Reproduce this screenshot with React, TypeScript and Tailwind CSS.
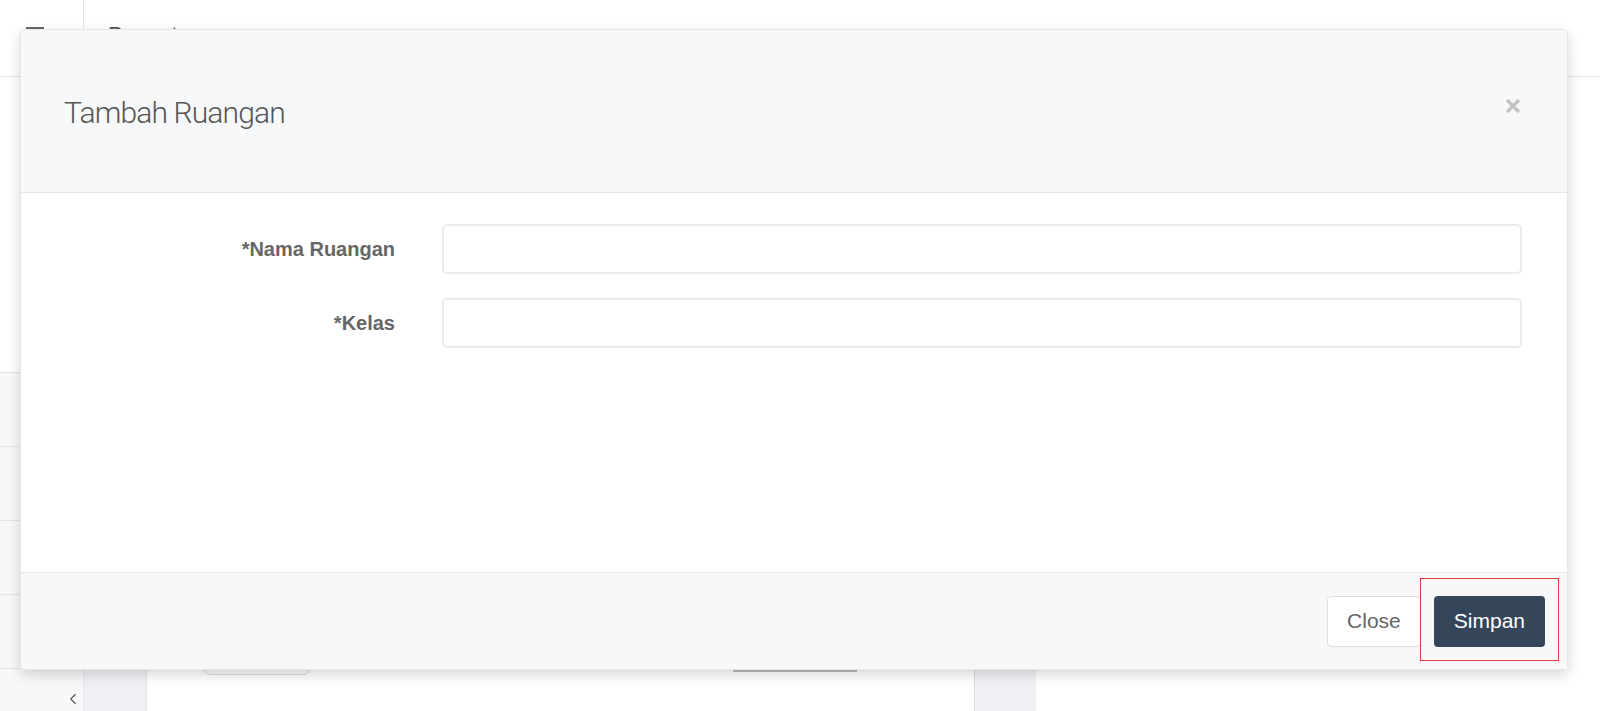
import { ChevronLeft } from "lucide-react";

function CloseIcon() {
  return (
    <svg width="16" height="16" viewBox="0 0 16 16" fill="none">
      <path d="M2 2L14 14M14 2L2 14" stroke="#c4c4c4" strokeWidth="3.2" />
    </svg>
  );
}

function FormRow({ label }: { label: string }) {
  return (
    <div className="flex items-center">
      <label className="w-[374px] text-right text-[20px] font-bold text-[#666]">
        {label}
      </label>
      <input
        type="text"
        className="ml-[47px] h-[50px] flex-1 rounded-[5px] border-2 border-[#ebebeb] bg-white px-3 outline-none"
      />
    </div>
  );
}

export default function App() {
  return (
    <div className="relative h-[711px] w-[1600px] overflow-hidden bg-white font-['Liberation_Sans',Arial,sans-serif]">
      {/* Halaman di belakang modal */}
      <div className="flex h-full">
        <aside className="flex w-[84px] flex-col border-r border-[#e4e4e4]">
          <div className="flex h-[77px] flex-col gap-[5px] border-b border-[#e4e4e4] pl-[26px] pt-[27px]">
            <span className="h-[2px] w-[18px] bg-[#666]" />
            <span className="h-[2px] w-[18px] bg-[#666]" />
            <span className="h-[2px] w-[18px] bg-[#666]" />
          </div>
          <div className="h-[295px]" />
          {[0, 1, 2, 3].map((i) => (
            <div key={i} className="h-[74px] border-t border-[#e4e4e4] bg-[#f7f8fa]" />
          ))}
          <div className="flex flex-1 items-end justify-end border-t border-[#e4e4e4] bg-[#f7f8fa] pb-[3px] pr-[1px]">
            <ChevronLeft size={18} strokeWidth={1.5} className="text-[#555]" />
          </div>
        </aside>

        <main className="flex flex-1 flex-col">
          <div className="h-[77px] border-b border-[#e4e4e4] pl-[24px] pt-[18px] text-[22px] text-[#555]">
            Pengaturan
          </div>
          <div className="flex flex-1">
            <div className="w-[63px] border-r border-[#e4e4e4] bg-[#f0f1f5]" />
            <div className="flex w-[827px] items-start pt-[558px]">
              <div className="ml-[57px] h-[40px] w-[105px] rounded-[5px] border border-[#dcdcdc] bg-[#fafafa]" />
              <div className="ml-[424px] mt-[35px] h-[2px] w-[124px] bg-[#bdbdbd]" />
            </div>
            <div className="w-[62px] border-l border-[#dedede] bg-[#f0f1f5]" />
            <div className="flex-1" />
          </div>
        </main>
      </div>

      {/* Modal Tambah Ruangan */}
      <div className="absolute left-[20px] top-[29px] flex h-[641px] w-[1548px] flex-col overflow-hidden rounded-[4px] border border-[#e6e6e6] shadow-[0_5px_14px_rgba(0,0,0,0.16)]">
        <div className="flex h-[163px] items-center justify-between border-b border-[#e6e6e6] bg-[#f7f8fa] pl-[43px] pr-[46px]">
          <h4 className="mt-[2px] font-['Roboto',sans-serif] text-[30px] font-light tracking-[-0.85px] text-[#555]">
            Tambah Ruangan
          </h4>
          <button className="mb-[11px]">
            <CloseIcon />
          </button>
        </div>

        <div className="flex flex-1 flex-col gap-[24px] bg-white pr-[45px] pt-[31px]">
          <FormRow label="*Nama Ruangan" />
          <FormRow label="*Kelas" />
        </div>

        <div className="flex h-[97px] items-center justify-end gap-[13px] border-t border-[#e6e6e6] bg-[#f7f8fa] pr-[22px]">
          <button className="h-[51px] rounded-[4px] border border-[#dedede] bg-white px-[19px] text-[21px] text-[#666]">
            Close
          </button>
          <button className="h-[51px] rounded-[4px] bg-[#35465b] px-[20px] text-[21px] text-white">
            Simpan
          </button>
        </div>
      </div>

      {/* Penanda merah */}
      <div className="absolute left-[1420px] top-[578px] h-[83px] w-[139px] border-[1.5px] border-[#e53935]" />
    </div>
  );
}
